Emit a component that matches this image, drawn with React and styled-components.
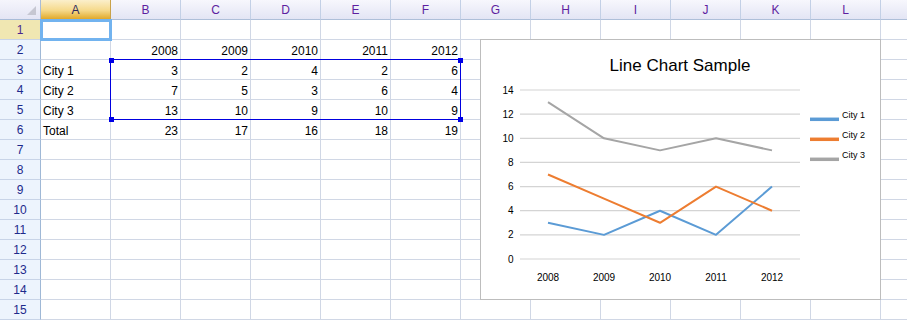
import React from 'react';
import styled, { createGlobalStyle } from 'styled-components';

const GlobalStyle = createGlobalStyle`
  html, body { margin: 0; padding: 0; background: #fff; }
  body { font-family: "Liberation Sans", Arial, sans-serif; }
`;

const COLS = ['A', 'B', 'C', 'D', 'E', 'F', 'G', 'H', 'I', 'J', 'K', 'L', 'M'];
const VISIBLE_LABELS = 12;
const ROW_COUNT = 15;

const DATA = {
  2: { B: '2008', C: '2009', D: '2010', E: '2011', F: '2012' },
  3: { A: 'City 1', B: '3', C: '2', D: '4', E: '2', F: '6' },
  4: { A: 'City 2', B: '7', C: '5', D: '3', E: '6', F: '4' },
  5: { A: 'City 3', B: '13', C: '10', D: '9', E: '10', F: '9' },
  6: { A: 'Total', B: '23', C: '17', D: '16', E: '18', F: '19' },
};

const Sheet = styled.div`
  position: relative;
  width: 907px;
  height: 320px;
  overflow: hidden;
  background: #fff;
`;

const Grid = styled.div`
  display: grid;
  grid-template-columns: 41px repeat(13, 70px);
  grid-auto-rows: 20px;
  width: max-content;
  font-family: "Liberation Sans", Arial, sans-serif;
  font-size: 12px;
`;

const Corner = styled.div`
  position: relative;
  box-sizing: border-box;
  background: linear-gradient(#f5f5fc, #e4e5f4);
  border-right: 1px solid #a9bcd8;
  border-bottom: 1px solid #a9bcd8;
  &::after {
    content: '';
    position: absolute;
    right: 4px;
    bottom: 4px;
    width: 0;
    height: 0;
    border-left: 9px solid transparent;
    border-bottom: 9px solid #c6c7d2;
  }
`;

const ColHeader = styled.div`
  box-sizing: border-box;
  display: flex;
  align-items: center;
  justify-content: center;
  padding-top: 1px;
  background: ${(p) =>
    p.$selected
      ? 'linear-gradient(#fbefcb, #f5d98a 55%, #e1a92a)'
      : 'linear-gradient(#f7f7fd, #e3e5f4)'};
  color: ${(p) => (p.$selected ? '#2e2a5e' : '#5d1fa0')};
  border-right: 1px solid ${(p) => (p.$selected ? '#c9a24a' : '#c3d0e6')};
  border-bottom: 1px solid ${(p) => (p.$selected ? '#74b4ee' : '#aebfd9')};
`;

const RowHeader = styled.div`
  box-sizing: border-box;
  display: flex;
  align-items: center;
  justify-content: center;
  padding-top: 1px;
  background: ${(p) => (p.$selected ? '#f0e7b2' : '#edf4fd')};
  color: ${(p) => (p.$selected ? '#4b268e' : '#1d2a8c')};
  border-right: 1px solid ${(p) => (p.$selected ? '#74b4ee' : '#9fb8d6')};
  border-bottom: 1px solid #c8d4e8;
`;

const Cell = styled.div`
  box-sizing: border-box;
  display: flex;
  align-items: flex-end;
  justify-content: ${(p) => (p.$align === 'right' ? 'flex-end' : 'flex-start')};
  padding: 0 2px 1px 2px;
  color: #000;
  white-space: nowrap;
  overflow: hidden;
  border-right: 1px solid #d0d7e5;
  border-bottom: 1px solid #d0d7e5;
`;

const ActiveCell = styled.div`
  position: absolute;
  left: 40px;
  top: 19px;
  width: 72px;
  height: 22px;
  box-sizing: border-box;
  border: 3px solid #72b3ef;
  pointer-events: none;
`;

const RangeBox = styled.div`
  position: absolute;
  left: 110px;
  top: 59px;
  width: 351px;
  height: 61px;
  box-sizing: border-box;
  border: 1px solid #0000e0;
  pointer-events: none;
`;

const Handle = styled.div`
  position: absolute;
  width: 5px;
  height: 5px;
  background: #0000e6;
  ${(p) => (p.$left ? 'left: -2px;' : 'right: -3px;')}
  ${(p) => (p.$top ? 'top: -2px;' : 'bottom: -3px;')}
`;

const ChartFrame = styled.div`
  position: absolute;
  left: 480px;
  top: 39px;
  width: 401px;
  height: 261px;
  box-sizing: border-box;
  background: #fff;
  border: 1px solid #bdbdbd;
`;

const ChartSvg = styled.svg`
  display: block;
  font-family: "Liberation Sans", Arial, sans-serif;
`;

// page coords -> local coords (origin at 481, 40)
const OX = 481;
const OY = 40;
const yOf = (v) => 90 + (14 - v) * (169 / 14) - OY;
const XS = [548, 604, 660, 716, 772].map((x) => x - OX);
const YEARS = ['2008', '2009', '2010', '2011', '2012'];
const SERIES = [
  { name: 'City 1', color: '#5b9bd5', values: [3, 2, 4, 2, 6] },
  { name: 'City 2', color: '#ed7d31', values: [7, 5, 3, 6, 4] },
  { name: 'City 3', color: '#a5a5a5', values: [13, 10, 9, 10, 9] },
];

function Chart() {
  const ticks = [0, 2, 4, 6, 8, 10, 12, 14];
  return (
    <ChartFrame>
      <ChartSvg width="399" height="259" viewBox="0 0 399 259">
        <text x={680 - OX} y={70.5 - OY} fontSize="17" textAnchor="middle" fill="#000">
          Line Chart Sample
        </text>
        {ticks.map((t) => (
          <g key={t}>
            <line x1={520 - OX} x2={800 - OX} y1={yOf(t)} y2={yOf(t)} stroke="#d4d4d4" strokeWidth="1.2" />
            <text x={513.5 - OX} y={yOf(t) + 3.5} fontSize="10" textAnchor="end" fill="#000">
              {t}
            </text>
          </g>
        ))}
        {YEARS.map((y, i) => (
          <text key={y} x={XS[i]} y={280.5 - OY} fontSize="10" textAnchor="middle" fill="#000">
            {y}
          </text>
        ))}
        {SERIES.map((s) => (
          <polyline
            key={s.name}
            fill="none"
            stroke={s.color}
            strokeWidth="2"
            strokeLinejoin="round"
            points={s.values.map((v, i) => `${XS[i]},${yOf(v)}`).join(' ')}
          />
        ))}
        {SERIES.map((s, i) => (
          <g key={s.name}>
            <line
              x1={810 - OX}
              x2={839 - OX}
              y1={119.3 + i * 20 - OY}
              y2={119.3 + i * 20 - OY}
              stroke={s.color}
              strokeWidth="3.5"
            />
            <text x={842 - OX} y={117.5 + i * 20 - OY} fontSize="9" fill="#000">
              {s.name}
            </text>
          </g>
        ))}
      </ChartSvg>
    </ChartFrame>
  );
}

export default function App() {
  const rows = Array.from({ length: ROW_COUNT }, (_, i) => i + 1);
  return (
    <>
      <GlobalStyle />
      <Sheet>
        <Grid>
          <Corner />
          {COLS.map((c, i) => (
            <ColHeader key={c} $selected={c === 'A'}>
              {i < VISIBLE_LABELS ? c : ''}
            </ColHeader>
          ))}
          {rows.map((r) => (
            <React.Fragment key={r}>
              <RowHeader $selected={r === 1}>{r}</RowHeader>
              {COLS.map((c) => (
                <Cell key={c} $align={c === 'A' ? 'left' : 'right'}>
                  {DATA[r] && DATA[r][c]}
                </Cell>
              ))}
            </React.Fragment>
          ))}
        </Grid>
        <ActiveCell />
        <RangeBox>
          <Handle $left $top />
          <Handle $top />
          <Handle $left />
          <Handle />
        </RangeBox>
        <Chart />
      </Sheet>
    </>
  );
}
